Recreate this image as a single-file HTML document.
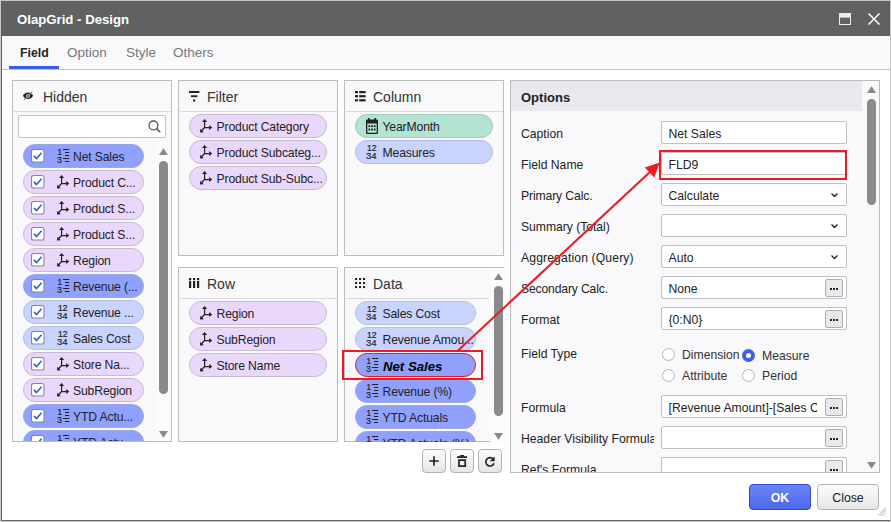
<!DOCTYPE html>
<html lang="en">
<head>
<meta charset="utf-8">
<title>OlapGrid - Design</title>
<style>
*{box-sizing:border-box;margin:0;padding:0}
html,body{width:891px;height:522px;overflow:hidden;background:#c6c6c6;font-family:"Liberation Sans","NanumGothic",sans-serif;font-size:12.2px;color:#222}
.abs{position:absolute}
#frame{position:absolute;left:1px;top:1px;width:889px;height:520px;background:#fff;border-left:1px solid #66666a;border-bottom:1px solid #66666a;border-radius:0 0 0 1px}
#title{position:absolute;left:1px;top:1px;width:889px;height:35px;background:#606163;color:#fff;font-weight:bold;font-size:13.2px;line-height:37px;padding-left:16px}
#tabs{position:absolute;left:2px;top:36px;width:888px;height:34px;background:#f9f9fb;border-bottom:1px solid #c4c4c7}
#tabs span{position:absolute;top:0;line-height:34px;font-size:13.5px;color:#777}
#tabs span.on{color:#222;font-weight:bold;font-size:12.3px}
#tabs i{position:absolute;left:7px;top:30px;width:50px;height:3px;background:#3b5bf0}
.panel{position:absolute;border:1px solid #bcbcbf;background:#f9f9fb;overflow:hidden}
.ph{position:absolute;left:1px;top:0;right:0;height:31px;border-bottom:1px solid #dadadd;font-size:14px;line-height:30px;color:#333}
.ph span{position:absolute;top:1px}
.pill{position:absolute;height:24px;border:1px solid #c6bcd0;border-radius:12px;background:#ead7fc;font-size:12.2px;line-height:22px;color:#222;white-space:nowrap;overflow:hidden}
.pill span{position:absolute;top:1px;letter-spacing:-0.15px}
.pill.b{background:#8fa1fd;border-color:#9ca6e0}
.pill.lb{background:#c8d3fe;border-color:#b8bfde}
.pill.g{background:#b2e3d3;border-color:#a4c9bd}
.pill.sel{border-color:#ed1c24}
.track{position:absolute;background:#fbfbfb}
.thumb{position:absolute;background:#8a8a8a;border-radius:4.5px}
.lbl{position:absolute;left:10px;font-size:12.2px;line-height:23px;padding-top:2px;height:25px;white-space:nowrap;overflow:hidden;color:#222}
.inp{position:absolute;left:150px;width:186px;height:23px;border:1px solid #c0c0c4;border-radius:2px;background:#fff;font-size:12.2px;line-height:21px;padding-left:6.5px;padding-top:2px;white-space:nowrap;overflow:hidden;color:#222}
.dots{position:absolute;right:3px;top:2px;width:18px;height:18px;border:1px solid #aeaeb2;border-radius:2px;background:#e9e9eb}
.dots b{position:absolute;top:7.5px;width:2px;height:2px;background:#222}
.rad{position:absolute;width:13px;height:13px;border:1px solid #b4b4b8;border-radius:50%;background:#fff}
.rad.on{border:4px solid #3d5fe9}
.rl{position:absolute;font-size:12.2px;line-height:14px;color:#333}
.btn{position:absolute;border:1px solid #b2b2b6;border-radius:4px;background:linear-gradient(#fcfcfc,#e6e6e8)}
</style>
</head>
<body>
<div id="frame"></div>
<div id="title">OlapGrid - Design</div>
<svg class="abs" style="left:839px;top:13px" width="12" height="12" viewBox="0 0 12 12"><rect x=".5" y=".5" width="11" height="11" fill="none" stroke="#f0f0f2"/><rect x="0" y="0" width="12" height="4.6" fill="#ececf0"/></svg>
<svg class="abs" style="left:868px;top:13px" width="12" height="12" viewBox="0 0 12 12"><path d="M.5 .5L11.5 11.5M11.5 .5L.5 11.5" stroke="#fff" stroke-width="1.5" fill="none"/></svg>
<div id="tabs"><span class="on" style="left:18px">Field</span><span style="left:65px">Option</span><span style="left:124px">Style</span><span style="left:171px">Others</span><i></i></div>
<div class="panel" style="left:12px;top:80px;width:160px;height:362px">
<div class="ph"><svg class="abs" style="left:9px;top:10px" width="10" height="9" viewBox="0 0 10 9"><path d="M0 4.8C2 .5 8 .5 10 4.8C8 9.1 2 9.1 0 4.8z" fill="#222"/><circle cx="5" cy="4.8" r="1.9" fill="#e0e0e4"/><circle cx="5" cy="4.8" r="1" fill="#222"/><path d="M1.6 8.3L8.5 1.3" stroke="#f9f9fb" stroke-width="1.1"/><path d="M1 8.9L9.1 .7" stroke="#222" stroke-width=".9"/></svg><span style="left:29px">Hidden</span></div>
<div class="abs" style="left:5px;top:34px;width:148px;height:23px;border:1px solid #c2c2c6;border-radius:2px;background:#fff"><svg class="abs" style="left:128.5px;top:4px" width="13" height="13" viewBox="0 0 13 13"><circle cx="5.4" cy="5.4" r="4.4" fill="none" stroke="#555" stroke-width="1.3"/><path d="M8.6 8.6L12.3 12.2" stroke="#555" stroke-width="1.6"/></svg></div>
<div class="track" style="left:143px;top:62px;width:16px;height:298px"></div>
<div class="pill b" style="left:10px;top:63px;width:121px"><svg class="abs" style="left:7px;top:4px" width="13.5" height="13.5" viewBox="0 0 13 13"><rect x=".5" y=".5" width="12" height="12" rx="2" fill="#fff" stroke="#85858f"/><path d="M2.8 6.6L5.3 9.2L10.2 3.6" fill="none" stroke="#2f5ce8" stroke-width="1.5"/></svg><svg class="abs" style="left:33px;top:4px" width="13" height="15" viewBox="0 0 13 15"><text x="0.6" y="6.4" font-family="Liberation Sans, sans-serif" font-size="8.2" fill="#222" stroke="#222" stroke-width=".2">1</text><text x="0" y="14.3" font-family="Liberation Sans, sans-serif" font-size="9" fill="#222" stroke="#222" stroke-width=".15">3</text><g stroke="#222" stroke-width="1"><path d="M6 .5H12.2M8 3.5H12.2M8 6.5H12.2M6 9.5H12.2M8 12.5H12.2"/></g></svg><span style="left:49px;">Net Sales</span></div>
<div class="pill" style="left:10px;top:89px;width:121px"><svg class="abs" style="left:7px;top:4px" width="13.5" height="13.5" viewBox="0 0 13 13"><rect x=".5" y=".5" width="12" height="12" rx="2" fill="#fff" stroke="#85858f"/><path d="M2.8 6.6L5.3 9.2L10.2 3.6" fill="none" stroke="#2f5ce8" stroke-width="1.5"/></svg><svg class="abs" style="left:33px;top:4px" width="13" height="14.6" viewBox="0 0 13 14" preserveAspectRatio="none"><g fill="none" stroke="#222" stroke-width="1.2"><path d="M4.6 1.2V8.2H11.2M4.6 8.2L1 11.8"/></g><g fill="#222"><path d="M4.6 0L7.2 2.9H2z"/><path d="M12.2 8.2L9.2 5.8V10.6z"/><path d="M0 13L0.4 9.4L3.8 12.6z"/></g></svg><span style="left:49px;">Product C...</span></div>
<div class="pill" style="left:10px;top:115px;width:121px"><svg class="abs" style="left:7px;top:4px" width="13.5" height="13.5" viewBox="0 0 13 13"><rect x=".5" y=".5" width="12" height="12" rx="2" fill="#fff" stroke="#85858f"/><path d="M2.8 6.6L5.3 9.2L10.2 3.6" fill="none" stroke="#2f5ce8" stroke-width="1.5"/></svg><svg class="abs" style="left:33px;top:4px" width="13" height="14.6" viewBox="0 0 13 14" preserveAspectRatio="none"><g fill="none" stroke="#222" stroke-width="1.2"><path d="M4.6 1.2V8.2H11.2M4.6 8.2L1 11.8"/></g><g fill="#222"><path d="M4.6 0L7.2 2.9H2z"/><path d="M12.2 8.2L9.2 5.8V10.6z"/><path d="M0 13L0.4 9.4L3.8 12.6z"/></g></svg><span style="left:49px;">Product S...</span></div>
<div class="pill" style="left:10px;top:141px;width:121px"><svg class="abs" style="left:7px;top:4px" width="13.5" height="13.5" viewBox="0 0 13 13"><rect x=".5" y=".5" width="12" height="12" rx="2" fill="#fff" stroke="#85858f"/><path d="M2.8 6.6L5.3 9.2L10.2 3.6" fill="none" stroke="#2f5ce8" stroke-width="1.5"/></svg><svg class="abs" style="left:33px;top:4px" width="13" height="14.6" viewBox="0 0 13 14" preserveAspectRatio="none"><g fill="none" stroke="#222" stroke-width="1.2"><path d="M4.6 1.2V8.2H11.2M4.6 8.2L1 11.8"/></g><g fill="#222"><path d="M4.6 0L7.2 2.9H2z"/><path d="M12.2 8.2L9.2 5.8V10.6z"/><path d="M0 13L0.4 9.4L3.8 12.6z"/></g></svg><span style="left:49px;">Product S...</span></div>
<div class="pill" style="left:10px;top:167px;width:121px"><svg class="abs" style="left:7px;top:4px" width="13.5" height="13.5" viewBox="0 0 13 13"><rect x=".5" y=".5" width="12" height="12" rx="2" fill="#fff" stroke="#85858f"/><path d="M2.8 6.6L5.3 9.2L10.2 3.6" fill="none" stroke="#2f5ce8" stroke-width="1.5"/></svg><svg class="abs" style="left:33px;top:4px" width="13" height="14.6" viewBox="0 0 13 14" preserveAspectRatio="none"><g fill="none" stroke="#222" stroke-width="1.2"><path d="M4.6 1.2V8.2H11.2M4.6 8.2L1 11.8"/></g><g fill="#222"><path d="M4.6 0L7.2 2.9H2z"/><path d="M12.2 8.2L9.2 5.8V10.6z"/><path d="M0 13L0.4 9.4L3.8 12.6z"/></g></svg><span style="left:49px;">Region</span></div>
<div class="pill b" style="left:10px;top:193px;width:121px"><svg class="abs" style="left:7px;top:4px" width="13.5" height="13.5" viewBox="0 0 13 13"><rect x=".5" y=".5" width="12" height="12" rx="2" fill="#fff" stroke="#85858f"/><path d="M2.8 6.6L5.3 9.2L10.2 3.6" fill="none" stroke="#2f5ce8" stroke-width="1.5"/></svg><svg class="abs" style="left:33px;top:4px" width="13" height="15" viewBox="0 0 13 15"><text x="0.6" y="6.4" font-family="Liberation Sans, sans-serif" font-size="8.2" fill="#222" stroke="#222" stroke-width=".2">1</text><text x="0" y="14.3" font-family="Liberation Sans, sans-serif" font-size="9" fill="#222" stroke="#222" stroke-width=".15">3</text><g stroke="#222" stroke-width="1"><path d="M6 .5H12.2M8 3.5H12.2M8 6.5H12.2M6 9.5H12.2M8 12.5H12.2"/></g></svg><span style="left:49px;">Revenue (...</span></div>
<div class="pill lb" style="left:10px;top:219px;width:121px"><svg class="abs" style="left:7px;top:4px" width="13.5" height="13.5" viewBox="0 0 13 13"><rect x=".5" y=".5" width="12" height="12" rx="2" fill="#fff" stroke="#85858f"/><path d="M2.8 6.6L5.3 9.2L10.2 3.6" fill="none" stroke="#2f5ce8" stroke-width="1.5"/></svg><svg class="abs" style="left:33px;top:4px" width="12" height="15" viewBox="0 0 12 15"><text x="1" y="6.2" font-family="Liberation Sans, sans-serif" font-size="8.2" fill="#222" textLength="9.6" stroke="#222" stroke-width=".2" lengthAdjust="spacingAndGlyphs">12</text><text x="0" y="14.3" font-family="Liberation Sans, sans-serif" font-size="9" fill="#222" textLength="10.6" stroke="#222" stroke-width=".15" lengthAdjust="spacingAndGlyphs">34</text></svg><span style="left:49px;">Revenue ...</span></div>
<div class="pill lb" style="left:10px;top:245px;width:121px"><svg class="abs" style="left:7px;top:4px" width="13.5" height="13.5" viewBox="0 0 13 13"><rect x=".5" y=".5" width="12" height="12" rx="2" fill="#fff" stroke="#85858f"/><path d="M2.8 6.6L5.3 9.2L10.2 3.6" fill="none" stroke="#2f5ce8" stroke-width="1.5"/></svg><svg class="abs" style="left:33px;top:4px" width="12" height="15" viewBox="0 0 12 15"><text x="1" y="6.2" font-family="Liberation Sans, sans-serif" font-size="8.2" fill="#222" textLength="9.6" stroke="#222" stroke-width=".2" lengthAdjust="spacingAndGlyphs">12</text><text x="0" y="14.3" font-family="Liberation Sans, sans-serif" font-size="9" fill="#222" textLength="10.6" stroke="#222" stroke-width=".15" lengthAdjust="spacingAndGlyphs">34</text></svg><span style="left:49px;">Sales Cost</span></div>
<div class="pill" style="left:10px;top:271px;width:121px"><svg class="abs" style="left:7px;top:4px" width="13.5" height="13.5" viewBox="0 0 13 13"><rect x=".5" y=".5" width="12" height="12" rx="2" fill="#fff" stroke="#85858f"/><path d="M2.8 6.6L5.3 9.2L10.2 3.6" fill="none" stroke="#2f5ce8" stroke-width="1.5"/></svg><svg class="abs" style="left:33px;top:4px" width="13" height="14.6" viewBox="0 0 13 14" preserveAspectRatio="none"><g fill="none" stroke="#222" stroke-width="1.2"><path d="M4.6 1.2V8.2H11.2M4.6 8.2L1 11.8"/></g><g fill="#222"><path d="M4.6 0L7.2 2.9H2z"/><path d="M12.2 8.2L9.2 5.8V10.6z"/><path d="M0 13L0.4 9.4L3.8 12.6z"/></g></svg><span style="left:49px;">Store Na...</span></div>
<div class="pill" style="left:10px;top:297px;width:121px"><svg class="abs" style="left:7px;top:4px" width="13.5" height="13.5" viewBox="0 0 13 13"><rect x=".5" y=".5" width="12" height="12" rx="2" fill="#fff" stroke="#85858f"/><path d="M2.8 6.6L5.3 9.2L10.2 3.6" fill="none" stroke="#2f5ce8" stroke-width="1.5"/></svg><svg class="abs" style="left:33px;top:4px" width="13" height="14.6" viewBox="0 0 13 14" preserveAspectRatio="none"><g fill="none" stroke="#222" stroke-width="1.2"><path d="M4.6 1.2V8.2H11.2M4.6 8.2L1 11.8"/></g><g fill="#222"><path d="M4.6 0L7.2 2.9H2z"/><path d="M12.2 8.2L9.2 5.8V10.6z"/><path d="M0 13L0.4 9.4L3.8 12.6z"/></g></svg><span style="left:49px;">SubRegion</span></div>
<div class="pill b" style="left:10px;top:323px;width:121px"><svg class="abs" style="left:7px;top:4px" width="13.5" height="13.5" viewBox="0 0 13 13"><rect x=".5" y=".5" width="12" height="12" rx="2" fill="#fff" stroke="#85858f"/><path d="M2.8 6.6L5.3 9.2L10.2 3.6" fill="none" stroke="#2f5ce8" stroke-width="1.5"/></svg><svg class="abs" style="left:33px;top:4px" width="13" height="15" viewBox="0 0 13 15"><text x="0.6" y="6.4" font-family="Liberation Sans, sans-serif" font-size="8.2" fill="#222" stroke="#222" stroke-width=".2">1</text><text x="0" y="14.3" font-family="Liberation Sans, sans-serif" font-size="9" fill="#222" stroke="#222" stroke-width=".15">3</text><g stroke="#222" stroke-width="1"><path d="M6 .5H12.2M8 3.5H12.2M8 6.5H12.2M6 9.5H12.2M8 12.5H12.2"/></g></svg><span style="left:49px;">YTD Actu...</span></div>
<div class="pill b" style="left:10px;top:349px;width:121px"><svg class="abs" style="left:7px;top:4px" width="13.5" height="13.5" viewBox="0 0 13 13"><rect x=".5" y=".5" width="12" height="12" rx="2" fill="#fff" stroke="#85858f"/><path d="M2.8 6.6L5.3 9.2L10.2 3.6" fill="none" stroke="#2f5ce8" stroke-width="1.5"/></svg><svg class="abs" style="left:33px;top:4px" width="13" height="15" viewBox="0 0 13 15"><text x="0.6" y="6.4" font-family="Liberation Sans, sans-serif" font-size="8.2" fill="#222" stroke="#222" stroke-width=".2">1</text><text x="0" y="14.3" font-family="Liberation Sans, sans-serif" font-size="9" fill="#222" stroke="#222" stroke-width=".15">3</text><g stroke="#222" stroke-width="1"><path d="M6 .5H12.2M8 3.5H12.2M8 6.5H12.2M6 9.5H12.2M8 12.5H12.2"/></g></svg><span style="left:49px;">YTD Actu...</span></div>
<svg class="abs" style="left:146px;top:67px" width="9" height="7" viewBox="0 0 9 7"><path d="M4.5 0.3L9 7H0z" fill="#8a8a8a"/></svg>
<div class="thumb" style="left:146px;top:80px;width:9px;height:233px"></div>
<svg class="abs" style="left:146px;top:350px" width="9" height="7" viewBox="0 0 9 7"><path d="M0 0H9L4.5 6.7z" fill="#8a8a8a"/></svg>
</div>
<div class="panel" style="left:178px;top:80px;width:160px;height:176px">
<div class="ph"><svg class="abs" style="left:9px;top:10px" width="11" height="11" viewBox="0 0 11 11"><g fill="#222"><rect x="0" y="0" width="10.4" height="2"/><rect x="2" y="4.3" width="6.4" height="1.8"/><rect x="4" y="8.5" width="2.2" height="2"/></g></svg><span style="left:27px">Filter</span></div>
<div class="pill" style="left:10px;top:33px;width:138px"><svg class="abs" style="left:10px;top:4px" width="13" height="14.6" viewBox="0 0 13 14" preserveAspectRatio="none"><g fill="none" stroke="#222" stroke-width="1.2"><path d="M4.6 1.2V8.2H11.2M4.6 8.2L1 11.8"/></g><g fill="#222"><path d="M4.6 0L7.2 2.9H2z"/><path d="M12.2 8.2L9.2 5.8V10.6z"/><path d="M0 13L0.4 9.4L3.8 12.6z"/></g></svg><span style="left:26.5px;">Product Category</span></div>
<div class="pill" style="left:10px;top:59px;width:138px"><svg class="abs" style="left:10px;top:4px" width="13" height="14.6" viewBox="0 0 13 14" preserveAspectRatio="none"><g fill="none" stroke="#222" stroke-width="1.2"><path d="M4.6 1.2V8.2H11.2M4.6 8.2L1 11.8"/></g><g fill="#222"><path d="M4.6 0L7.2 2.9H2z"/><path d="M12.2 8.2L9.2 5.8V10.6z"/><path d="M0 13L0.4 9.4L3.8 12.6z"/></g></svg><span style="left:26.5px;">Product Subcateg...</span></div>
<div class="pill" style="left:10px;top:85px;width:138px"><svg class="abs" style="left:10px;top:4px" width="13" height="14.6" viewBox="0 0 13 14" preserveAspectRatio="none"><g fill="none" stroke="#222" stroke-width="1.2"><path d="M4.6 1.2V8.2H11.2M4.6 8.2L1 11.8"/></g><g fill="#222"><path d="M4.6 0L7.2 2.9H2z"/><path d="M12.2 8.2L9.2 5.8V10.6z"/><path d="M0 13L0.4 9.4L3.8 12.6z"/></g></svg><span style="left:26.5px;">Product Sub-Subc...</span></div>
</div>
<div class="panel" style="left:344px;top:80px;width:160px;height:176px">
<div class="ph"><svg class="abs" style="left:9px;top:10px" width="11" height="11" viewBox="0 0 11 11"><g fill="#222"><rect x="0" y="0" width="3" height="2.2"/><rect x="4.2" y="0" width="6.4" height="2.2"/><rect x="0" y="4.1" width="3" height="2.2"/><rect x="4.2" y="4.1" width="6.4" height="2.2"/><rect x="0" y="8.2" width="3" height="2.2"/><rect x="4.2" y="8.2" width="6.4" height="2.2"/></g></svg><span style="left:27px">Column</span></div>
<div class="pill g" style="left:10px;top:33px;width:138px"><svg class="abs" style="left:10px;top:3px" width="12" height="16" viewBox="0 0 12 16"><g fill="#222"><rect x="2" y="0" width="1.6" height="3"/><rect x="8.4" y="0" width="1.6" height="3"/><path d="M1.2 1.6H10.8Q12 1.6 12 2.8V14.8Q12 16 10.8 16H1.2Q0 16 0 14.8V2.8Q0 1.6 1.2 1.6zM1.3 5.4V14.7H10.7V5.4z" fill-rule="evenodd"/><rect x="2.4" y="7.3" width="1.8" height="1.8"/><rect x="5.1" y="7.3" width="1.8" height="1.8"/><rect x="7.8" y="7.3" width="1.8" height="1.8"/><rect x="2.4" y="10.6" width="1.8" height="1.8"/><rect x="5.1" y="10.6" width="1.8" height="1.8"/><rect x="7.8" y="10.6" width="1.8" height="1.8"/></g></svg><span style="left:26.5px;">YearMonth</span></div>
<div class="pill lb" style="left:10px;top:59px;width:138px"><svg class="abs" style="left:10px;top:4px" width="12" height="15" viewBox="0 0 12 15"><text x="1" y="6.2" font-family="Liberation Sans, sans-serif" font-size="8.2" fill="#222" textLength="9.6" stroke="#222" stroke-width=".2" lengthAdjust="spacingAndGlyphs">12</text><text x="0" y="14.3" font-family="Liberation Sans, sans-serif" font-size="9" fill="#222" textLength="10.6" stroke="#222" stroke-width=".15" lengthAdjust="spacingAndGlyphs">34</text></svg><span style="left:26.5px;">Measures</span></div>
</div>
<div class="panel" style="left:178px;top:267px;width:160px;height:175px">
<div class="ph"><svg class="abs" style="left:9px;top:10px" width="11" height="11" viewBox="0 0 11 11"><g fill="#222"><rect x="0" y="0" width="2.2" height="2.2"/><rect x="4" y="0" width="2.2" height="2.2"/><rect x="8" y="0" width="2.2" height="2.2"/><rect x="0" y="3" width="2.2" height="7"/><rect x="4" y="3" width="2.2" height="7"/><rect x="8" y="3" width="2.2" height="7"/></g></svg><span style="left:27px">Row</span></div>
<div class="pill" style="left:10px;top:33px;width:138px"><svg class="abs" style="left:10px;top:4px" width="13" height="14.6" viewBox="0 0 13 14" preserveAspectRatio="none"><g fill="none" stroke="#222" stroke-width="1.2"><path d="M4.6 1.2V8.2H11.2M4.6 8.2L1 11.8"/></g><g fill="#222"><path d="M4.6 0L7.2 2.9H2z"/><path d="M12.2 8.2L9.2 5.8V10.6z"/><path d="M0 13L0.4 9.4L3.8 12.6z"/></g></svg><span style="left:26.5px;">Region</span></div>
<div class="pill" style="left:10px;top:59px;width:138px"><svg class="abs" style="left:10px;top:4px" width="13" height="14.6" viewBox="0 0 13 14" preserveAspectRatio="none"><g fill="none" stroke="#222" stroke-width="1.2"><path d="M4.6 1.2V8.2H11.2M4.6 8.2L1 11.8"/></g><g fill="#222"><path d="M4.6 0L7.2 2.9H2z"/><path d="M12.2 8.2L9.2 5.8V10.6z"/><path d="M0 13L0.4 9.4L3.8 12.6z"/></g></svg><span style="left:26.5px;">SubRegion</span></div>
<div class="pill" style="left:10px;top:85px;width:138px"><svg class="abs" style="left:10px;top:4px" width="13" height="14.6" viewBox="0 0 13 14" preserveAspectRatio="none"><g fill="none" stroke="#222" stroke-width="1.2"><path d="M4.6 1.2V8.2H11.2M4.6 8.2L1 11.8"/></g><g fill="#222"><path d="M4.6 0L7.2 2.9H2z"/><path d="M12.2 8.2L9.2 5.8V10.6z"/><path d="M0 13L0.4 9.4L3.8 12.6z"/></g></svg><span style="left:26.5px;">Store Name</span></div>
</div>
<div class="panel" style="left:344px;top:267px;width:160px;height:175px;border-right:none;border-bottom:none">
<div class="abs" style="left:0;bottom:0;width:145px;height:1px;background:#bcbcbf"></div>
<div class="ph" style="right:15px"><svg class="abs" style="left:9px;top:10px" width="11" height="11" viewBox="0 0 11 11"><g fill="#222"><rect x="0" y="0" width="2.1" height="2.1"/><rect x="4" y="0" width="2.1" height="2.1"/><rect x="8" y="0" width="2.1" height="2.1"/><rect x="0" y="4" width="2.1" height="2.1"/><rect x="4" y="4" width="2.1" height="2.1"/><rect x="8" y="4" width="2.1" height="2.1"/><rect x="0" y="8" width="2.1" height="2.1"/><rect x="4" y="8" width="2.1" height="2.1"/><rect x="8" y="8" width="2.1" height="2.1"/></g></svg><span style="left:27px">Data</span></div>
<div class="track" style="left:145px;top:0;width:14px;height:175px"></div>
<div class="pill lb" style="left:10px;top:33px;width:121px"><svg class="abs" style="left:10px;top:4px" width="12" height="15" viewBox="0 0 12 15"><text x="1" y="6.2" font-family="Liberation Sans, sans-serif" font-size="8.2" fill="#222" textLength="9.6" stroke="#222" stroke-width=".2" lengthAdjust="spacingAndGlyphs">12</text><text x="0" y="14.3" font-family="Liberation Sans, sans-serif" font-size="9" fill="#222" textLength="10.6" stroke="#222" stroke-width=".15" lengthAdjust="spacingAndGlyphs">34</text></svg><span style="left:26.5px;">Sales Cost</span></div>
<div class="pill lb" style="left:10px;top:59px;width:121px"><svg class="abs" style="left:10px;top:4px" width="12" height="15" viewBox="0 0 12 15"><text x="1" y="6.2" font-family="Liberation Sans, sans-serif" font-size="8.2" fill="#222" textLength="9.6" stroke="#222" stroke-width=".2" lengthAdjust="spacingAndGlyphs">12</text><text x="0" y="14.3" font-family="Liberation Sans, sans-serif" font-size="9" fill="#222" textLength="10.6" stroke="#222" stroke-width=".15" lengthAdjust="spacingAndGlyphs">34</text></svg><span style="left:26.5px;">Revenue Amou...</span></div>
<div class="pill b sel" style="left:10px;top:85px;width:121px"><svg class="abs" style="left:10px;top:4px" width="13" height="15" viewBox="0 0 13 15"><text x="0.6" y="6.4" font-family="Liberation Sans, sans-serif" font-size="8.2" fill="#222" stroke="#222" stroke-width=".2">1</text><text x="0" y="14.3" font-family="Liberation Sans, sans-serif" font-size="9" fill="#222" stroke="#222" stroke-width=".15">3</text><g stroke="#222" stroke-width="1"><path d="M6 .5H12.2M8 3.5H12.2M8 6.5H12.2M6 9.5H12.2M8 12.5H12.2"/></g></svg><span style="left:26.5px;font-weight:bold;font-style:italic;color:#000;font-size:13.2px;letter-spacing:0;top:2px;left:27px">Net Sales</span></div>
<div class="pill b" style="left:10px;top:111px;width:121px"><svg class="abs" style="left:10px;top:4px" width="13" height="15" viewBox="0 0 13 15"><text x="0.6" y="6.4" font-family="Liberation Sans, sans-serif" font-size="8.2" fill="#222" stroke="#222" stroke-width=".2">1</text><text x="0" y="14.3" font-family="Liberation Sans, sans-serif" font-size="9" fill="#222" stroke="#222" stroke-width=".15">3</text><g stroke="#222" stroke-width="1"><path d="M6 .5H12.2M8 3.5H12.2M8 6.5H12.2M6 9.5H12.2M8 12.5H12.2"/></g></svg><span style="left:26.5px;">Revenue (%)</span></div>
<div class="pill b" style="left:10px;top:137px;width:121px"><svg class="abs" style="left:10px;top:4px" width="13" height="15" viewBox="0 0 13 15"><text x="0.6" y="6.4" font-family="Liberation Sans, sans-serif" font-size="8.2" fill="#222" stroke="#222" stroke-width=".2">1</text><text x="0" y="14.3" font-family="Liberation Sans, sans-serif" font-size="9" fill="#222" stroke="#222" stroke-width=".15">3</text><g stroke="#222" stroke-width="1"><path d="M6 .5H12.2M8 3.5H12.2M8 6.5H12.2M6 9.5H12.2M8 12.5H12.2"/></g></svg><span style="left:26.5px;">YTD Actuals</span></div>
<div class="pill b" style="left:10px;top:163px;width:121px"><svg class="abs" style="left:10px;top:4px" width="13" height="15" viewBox="0 0 13 15"><text x="0.6" y="6.4" font-family="Liberation Sans, sans-serif" font-size="8.2" fill="#222" stroke="#222" stroke-width=".2">1</text><text x="0" y="14.3" font-family="Liberation Sans, sans-serif" font-size="9" fill="#222" stroke="#222" stroke-width=".15">3</text><g stroke="#222" stroke-width="1"><path d="M6 .5H12.2M8 3.5H12.2M8 6.5H12.2M6 9.5H12.2M8 12.5H12.2"/></g></svg><span style="left:26.5px;">YTD Actuals (%)</span></div>
<svg class="abs" style="left:148.5px;top:5px" width="9" height="7" viewBox="0 0 9 7"><path d="M4.5 0.3L9 7H0z" fill="#8a8a8a"/></svg>
<div class="thumb" style="left:149px;top:18px;width:9px;height:130px"></div>
<svg class="abs" style="left:149px;top:165px" width="9" height="7" viewBox="0 0 9 7"><path d="M0 0H9L4.5 6.7z" fill="#8a8a8a"/></svg>
</div>
<div class="btn" style="left:422px;top:449px;width:24px;height:24px"><svg class="abs" style="left:6px;top:6px" width="10" height="10" viewBox="0 0 11 11"><path d="M5.5 .3V10.7M.3 5.5H10.7" stroke="#222" stroke-width="1.8"/></svg></div>
<div class="btn" style="left:450px;top:449px;width:24px;height:24px"><svg class="abs" style="left:6px;top:5px" width="10.2" height="12" viewBox="0 0 11 12" preserveAspectRatio="none"><g fill="#222"><rect x="3.4" y="0" width="4.2" height="1.6"/><rect x="0" y="1.2" width="11" height="1.8"/><path d="M1.2 4.2H9.8V12H1.2zM3 5.9V10.2H8V5.9z" fill-rule="evenodd"/></g></svg></div>
<div class="btn" style="left:478px;top:449px;width:24px;height:24px"><svg class="abs" style="left:5px;top:5.5px" width="12" height="12" viewBox="0 0 12 12"><path d="M9.3 3.2A4.2 4.2 0 1 0 10 7.2" fill="none" stroke="#222" stroke-width="1.6"/><path d="M10.6 .4V5.2H5.8z" fill="#222"/></svg></div>
<div class="panel" style="left:510px;top:80px;width:370px;height:393px">
<div class="abs" style="left:0;top:0;width:351px;height:30px;background:#e9e9ed;font-weight:bold;font-size:13px;line-height:33px;padding-left:10px;color:#222">Options</div>
<div class="lbl" style="top:40px;width:133px;letter-spacing:0px">Caption</div>
<div class="inp" style="top:40px">Net Sales</div>
<div class="lbl" style="top:71px;width:133px;letter-spacing:0px">Field Name</div>
<div class="inp" style="top:71px">FLD9</div>
<div class="lbl" style="top:102px;width:133px;letter-spacing:-0.13px">Primary Calc.</div>
<div class="inp" style="top:102px">Calculate<svg class="abs" style="right:8px;top:8.5px" width="7" height="4.5" viewBox="0 0 8 5"><path d="M.6 .6L4 4L7.4 .6" fill="none" stroke="#222" stroke-width="1.5"/></svg></div>
<div class="lbl" style="top:133px;width:133px;letter-spacing:-0.05px">Summary (Total)</div>
<div class="inp" style="top:133px"><svg class="abs" style="right:8px;top:8.5px" width="7" height="4.5" viewBox="0 0 8 5"><path d="M.6 .6L4 4L7.4 .6" fill="none" stroke="#222" stroke-width="1.5"/></svg></div>
<div class="lbl" style="top:164px;width:133px;letter-spacing:0.12px">Aggregation (Query)</div>
<div class="inp" style="top:164px">Auto<svg class="abs" style="right:8px;top:8.5px" width="7" height="4.5" viewBox="0 0 8 5"><path d="M.6 .6L4 4L7.4 .6" fill="none" stroke="#222" stroke-width="1.5"/></svg></div>
<div class="lbl" style="top:195px;width:133px;letter-spacing:-0.17px">Secondary Calc.</div>
<div class="inp" style="top:195px"><span class="abs" style="left:6.5px;top:2px;width:148.5px;overflow:hidden">None</span><div class="dots"><b style="left:4px"></b><b style="left:7px"></b><b style="left:10px"></b></div></div>
<div class="lbl" style="top:226px;width:133px;letter-spacing:0px">Format</div>
<div class="inp" style="top:226px"><span class="abs" style="left:6.5px;top:2px;width:148.5px;overflow:hidden">{0:N0}</span><div class="dots"><b style="left:4px"></b><b style="left:7px"></b><b style="left:10px"></b></div></div>
<div class="lbl" style="top:314px;width:133px;letter-spacing:0px">Formula</div>
<div class="inp" style="top:314px"><span class="abs" style="left:6.5px;top:2px;width:148.5px;overflow:hidden">[Revenue Amount]-[Sales Cost]</span><div class="dots"><b style="left:4px"></b><b style="left:7px"></b><b style="left:10px"></b></div></div>
<div class="lbl" style="top:345px;width:133px;letter-spacing:0px">Header Visibility Formula</div>
<div class="inp" style="top:345px"><span class="abs" style="left:6.5px;top:2px;width:148.5px;overflow:hidden"></span><div class="dots"><b style="left:4px"></b><b style="left:7px"></b><b style="left:10px"></b></div></div>
<div class="lbl" style="top:376px;width:133px;letter-spacing:0px">Ref's Formula</div>
<div class="inp" style="top:376px"><span class="abs" style="left:6.5px;top:2px;width:148.5px;overflow:hidden"></span><div class="dots"><b style="left:4px"></b><b style="left:7px"></b><b style="left:10px"></b></div></div>
<div class="lbl" style="top:260px">Field Type</div>
<div class="rad" style="left:151px;top:267px"></div><div class="rl" style="left:171px;top:267px">Dimension</div>
<div class="rad on" style="left:231px;top:268px"></div><div class="rl" style="left:251px;top:268px">Measure</div>
<div class="rad" style="left:151px;top:288px"></div><div class="rl" style="left:171px;top:288px">Attribute</div>
<div class="rad" style="left:231px;top:288px"></div><div class="rl" style="left:251px;top:288px">Period</div>
<svg class="abs" style="left:356px;top:5px" width="9" height="7" viewBox="0 0 9 7"><path d="M4.5 0.3L9 7H0z" fill="#8a8a8a"/></svg>
<div class="thumb" style="left:356px;top:18px;width:9px;height:106px"></div>
<svg class="abs" style="left:356px;top:381px" width="9" height="7" viewBox="0 0 9 7"><path d="M0 0H9L4.5 6.7z" fill="#8a8a8a"/></svg>
</div>
<div class="abs" style="left:749px;top:484px;width:62px;height:26px;border:1px solid #2b49d6;border-radius:4px;background:linear-gradient(#6a84f6,#4c69ea);color:#fff;font-weight:bold;font-size:12.4px;line-height:26px;text-align:center">OK</div>
<div class="btn" style="left:817px;top:484px;width:62px;height:26px;font-size:12.3px;line-height:26px;text-align:center;color:#222">Close</div>
<svg class="abs" style="left:878px;top:508px" width="8" height="8" viewBox="0 0 8 8"><path d="M0 7.5L7.5 0M2.5 7.5L7.5 2.5M5 7.5L7.5 5" stroke="#777" stroke-width="1" stroke-dasharray="1 0.6" fill="none"/></svg>
<div class="abs" style="left:342px;top:350px;width:141px;height:30px;border:2px solid #ed1c24"></div>
<div class="abs" style="left:659px;top:150px;width:188px;height:30px;border:2px solid #ed1c24"></div>
<svg class="abs" style="left:0;top:0" width="891" height="522" viewBox="0 0 891 522"><path d="M457.5 351L650.5 171.5" stroke="#ed1c24" stroke-width="2.1" fill="none"/><path d="M659.8 162.6L644.8 167.6L654.3 177.6z" fill="#ed1c24"/></svg>
</body>
</html>
